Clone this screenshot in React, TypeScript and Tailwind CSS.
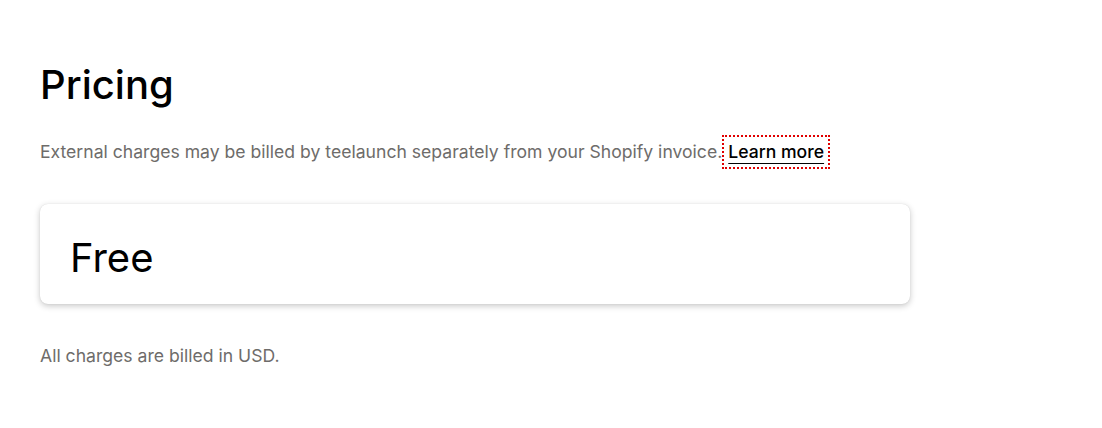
export default function App() {
  return (
    <div
      className="min-h-[428px] bg-white px-10 pt-[61px]"
      style={{ fontFamily: 'Inter, "Noto Sans", sans-serif' }}
    >
      <h1 className="text-[40px] font-medium leading-[48px] text-black">Pricing</h1>
      <p className="mt-[28px] text-[17.6px] leading-6 text-[#6e6c6a]">
        External charges may be billed by teelaunch separately from your Shopify invoice.
        <a
          href="#"
          className="ml-[2px] inline-block px-1 py-[3px] font-medium text-black underline decoration-1 underline-offset-[5px] outline-2 outline-dotted outline-[#e00000]"
        >
          Learn more
        </a>
      </p>
      <div className="mt-[37px] h-[100px] w-[870px] rounded-lg bg-white px-[30px] pt-[30px] shadow-[0_2px_6px_rgba(0,0,0,0.22),0_0_1px_rgba(0,0,0,0.15)]">
        <div className="text-[40px] font-normal leading-[48px] text-black">Free</div>
      </div>
      <p className="mt-[40px] text-[17.6px] leading-6 text-[#6e6c6a]">All charges are billed in USD.</p>
    </div>
  );
}
